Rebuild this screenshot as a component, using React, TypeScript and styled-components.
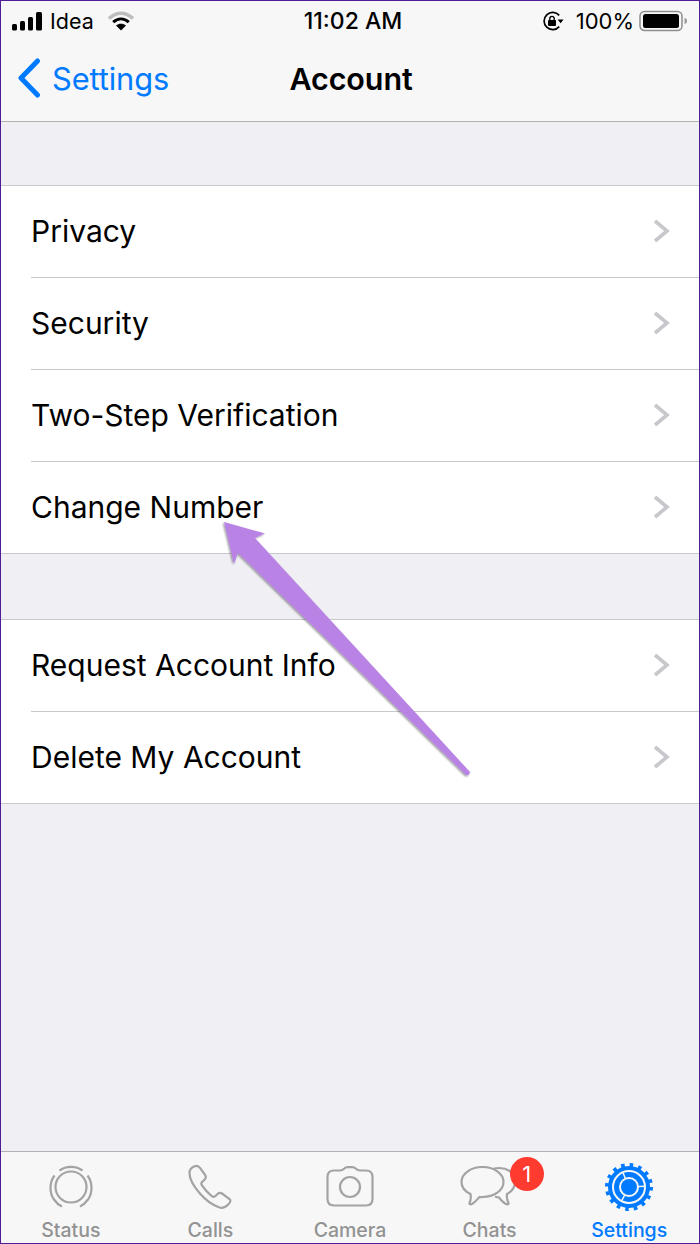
import React from "react";
import styled, { createGlobalStyle } from "styled-components";

const Global = createGlobalStyle`
  html, body { margin: 0; padding: 0; background: #efeff4; }
  * { box-sizing: border-box; }
`;

const Frame = styled.div`
  position: relative;
  width: 700px;
  height: 1244px;
  display: flex;
  flex-direction: column;
  background: #efeff4;
  border: 1px solid #4f1d96;
  overflow: hidden;
  font-family: Inter, "Liberation Sans", sans-serif;
  color: #000;
`;

const TopBars = styled.header`
  height: 121px;
  flex: none;
  background: #f7f7f7;
  border-bottom: 1px solid #b2b2b2;
  display: flex;
  flex-direction: column;
`;

const StatusBar = styled.div`
  height: 39px;
  padding: 0 10px;
  display: grid;
  grid-template-columns: 1fr auto 1fr;
  align-items: center;
`;

const StatusLeft = styled.div`
  display: flex;
  align-items: center;
  gap: 7px;
`;

const StatusRight = styled.div`
  display: flex;
  align-items: center;
  justify-content: flex-end;
  gap: 8px;
`;

const Carrier = styled.span`
  font-size: 21.5px;
  line-height: 24px;
  margin-right: 6px;
`;

const Clock = styled.span`
  font-size: 23px;
  line-height: 26px;
  font-weight: 500;
  padding-left: 6px;
`;

const BatteryText = styled.span`
  font-size: 22px;
  line-height: 24px;
  margin: 0 -3px 0 2px;
`;

const NavBar = styled.div`
  flex: 1;
  padding: 0 0 5px 16px;
  display: grid;
  grid-template-columns: 1fr auto 1fr;
  align-items: center;
`;

const BackLink = styled.div`
  display: flex;
  align-items: center;
  gap: 11px;
  color: #007aff;
  font-size: 30.8px;
  letter-spacing: -0.1px;
`;

const Title = styled.div`
  font-size: 30.5px;
  font-weight: 600;
  letter-spacing: -0.1px;
  padding-right: 14px;
`;

const Content = styled.main`
  flex: 1;
  padding-top: 63px;
  display: flex;
  flex-direction: column;
  gap: 65px;
`;

const Group = styled.section`
  background: #fff;
  border-top: 1px solid #c8c7cc;
  border-bottom: 1px solid #c8c7cc;
  padding-left: 30px;
`;

const Row = styled.div`
  height: 92px;
  padding: 0 29px 2px 0;
  display: flex;
  align-items: center;
  justify-content: space-between;
  border-bottom: 1px solid #c8c7cc;
  font-size: 30px;

  &:last-child {
    height: 91px;
    border-bottom: none;
  }
`;

const TabBar = styled.nav`
  height: 92px;
  flex: none;
  background: #f7f7f7;
  border-top: 1px solid #b2b2b2;
  display: grid;
  grid-template-columns: repeat(5, 1fr);
`;

const Tab = styled.div<{ $active?: boolean }>`
  position: relative;
  display: flex;
  flex-direction: column;
  align-items: center;
  padding-top: 9px;
  color: ${(p) => (p.$active ? "#007aff" : "#929292")};
  font-size: 19.5px;
  font-weight: 500;
`;

const TabIcon = styled.div`
  height: 52px;
  display: flex;
  align-items: center;
  justify-content: center;
`;

const TabLabel = styled.span`
  line-height: 24px;
  margin-top: 5px;
`;

const Badge = styled.span`
  position: absolute;
  top: 5px;
  left: 90px;
  width: 34px;
  height: 34px;
  border-radius: 50%;
  background: #ff3b30;
  color: #fff;
  font-size: 22px;
  font-weight: 400;
  display: flex;
  align-items: center;
  justify-content: center;
`;

const ArrowLayer = styled.svg`
  position: absolute;
  left: -1px;
  top: -1px;
  pointer-events: none;
`;

const Chevron = () => (
  <svg width="18" height="26" viewBox="0 0 18 26" fill="none">
    <path d="M3 3l12 10L3 23" stroke="#c7c7cc" strokeWidth="3.6" />
  </svg>
);

const rows1 = ["Privacy", "Security", "Two-Step Verification", "Change Number"];
const rows2 = ["Request Account Info", "Delete My Account"];

export default function App() {
  return (
    <>
      <Global />
      <Frame>
        <TopBars>
          <StatusBar>
            <StatusLeft>
              <svg width="32" height="20" viewBox="0 0 32 20" fill="#000">
                <rect x="1" y="13" width="5" height="6.5" rx="1.5" />
                <rect x="9" y="10" width="5" height="9.5" rx="1.5" />
                <rect x="17" y="6" width="5" height="13.5" rx="1.5" />
                <rect x="25" y="1" width="6" height="18.5" rx="1.5" />
              </svg>
              <Carrier>Idea</Carrier>
              <svg width="28" height="20" viewBox="0 0 28 20" fill="none">
                <path d="M2 7.5C9.5 .5 18.5 .5 26 7.5" stroke="#bdbdbd" strokeWidth="3.4" />
                <path d="M6.2 11.2C11 6.8 17 6.8 21.8 11.2" stroke="#000" strokeWidth="3" />
                <path d="M14 19.5l-5-5c3-2.2 7-2.2 10 0z" fill="#000" />
              </svg>
            </StatusLeft>
            <Clock>11:02 AM</Clock>
            <StatusRight>
              <svg width="24" height="22" viewBox="0 0 24 22" fill="none">
                <path d="M17.2 16.6A8.6 8.6 0 1 1 17.2 5.4" stroke="#000" strokeWidth="1.7" />
                <path d="M15.6 9.6h6l-3 3.6z" fill="#000" />
                <rect x="6" y="10" width="8" height="6" rx="1" fill="#000" />
                <path d="M7.8 10.500V8.600a2.200 2.200 0 0 1 4.400 0V10.500" stroke="#000" strokeWidth="1.400" />
              </svg>
              <BatteryText>100%</BatteryText>
              <svg width="50" height="22" viewBox="0 0 50 22" fill="none">
                <rect x="1" y="1.5" width="42" height="19" rx="4.5" stroke="#8e8e8e" strokeWidth="1.5" />
                <rect x="4" y="4" width="36" height="14" rx="2.5" fill="#000" />
                <path d="M45.5 8c2 .3 2.5 1.5 2.500 3s-.5 2.700-2.500 3z" fill="#9a9a9a" />
              </svg>
            </StatusRight>
          </StatusBar>
          <NavBar>
            <BackLink>
              <svg width="24" height="40" viewBox="0 0 24 40" fill="none">
                <path d="M20.5 3L4 20l16.500 17" stroke="#007aff" strokeWidth="5" strokeLinecap="round" strokeLinejoin="round" />
              </svg>
              <span>Settings</span>
            </BackLink>
            <Title>Account</Title>
            <span />
          </NavBar>
        </TopBars>

        <Content>
          <Group>
            {rows1.map((r) => (
              <Row key={r}>
                {r}
                <Chevron />
              </Row>
            ))}
          </Group>
          <Group>
            {rows2.map((r) => (
              <Row key={r}>
                {r}
                <Chevron />
              </Row>
            ))}
          </Group>
        </Content>

        <TabBar>
          <Tab>
            <TabIcon>
              <svg width="48" height="48" viewBox="0 0 48 48" fill="none" stroke="#a3a3a3" strokeWidth="2.2">
                <circle cx="24" cy="24" r="15.5" />
                <path d="M12.5 7.5C19 2.6 29 2.6 35.5 7.5" />
                <path d="M40.5 12.5C46 20 45.5 30 41 36.5C38.8 39.5 36.5 41.8 33 43.5" />
                <path d="M7.5 12.5C2 20 2.5 30 7 36.5C9 39.500 11.500 41.800 15 43.500" />
              </svg>
            </TabIcon>
            <TabLabel>Status</TabLabel>
          </Tab>
          <Tab>
            <TabIcon>
              <svg width="46" height="46" viewBox="0 0 46 46" fill="none" stroke="#a3a3a3" strokeWidth="2.2">
                <path d="M7 2.500c-2.300 1-4.500 3-4.500 6.500 0 6 4 13 10 20s14 12.500 20 14.500c3.500 1 6-.3 9-3.300 2-2 2.500-3.700 1-5.200l-7.500-5.500c-1.500-1-3-.8-4.500.5l-2 2c-1 1-2.500 1-4-.2-2.500-2-7.500-7.500-9.500-10.500-1-1.500-1-2.500.2-3.500l2.500-2.300c1.300-1.300 1.300-2.800.5-4.300L13 4c-1.500-2.300-3.500-2.600-6-1.500z" />
              </svg>
            </TabIcon>
            <TabLabel>Calls</TabLabel>
          </Tab>
          <Tab>
            <TabIcon>
              <svg width="48" height="42" viewBox="0 0 48 42" fill="none" stroke="#a3a3a3" strokeWidth="2.2">
                <path d="M8 4.500H14C16 4.500 17 3.800 18 2.800C19 1.500 20.500 1.200 22 1.200H26C27.500 1.200 29 1.500 30 2.800C31 3.800 32 4.500 34 4.500H40C44 4.500 46.500 7 46.500 11V33C46.500 37 44 39.500 40 39.500H8C4 39.500 1.500 37 1.500 33V11C1.500 7 4 4.500 8 4.500Z" />
                <circle cx="24" cy="21" r="10" />
              </svg>
            </TabIcon>
            <TabLabel>Camera</TabLabel>
          </Tab>
          <Tab>
            <TabIcon>
              <svg width="60" height="42" viewBox="0 0 60 42" fill="none" stroke="#a3a3a3" strokeWidth="2.2">
                <path d="M22.500 1C11 1 1.500 7.500 1.500 16C1.500 21 5 25.500 10.500 28C11 31 11 34 9.500 37C9 38.500 11 38.500 12 38C15 36.500 17.500 33 19.500 31C21 31.200 21.500 31 22.500 31C34 31 43.500 24.500 43.500 16C43.500 7.500 34 1 22.500 1Z" />
                <path d="M33 3C35 2.200 37.500 2 39.500 2C47 2 53 6 55 12C56 20 53 25 47 28C46.500 31 47 34 48.500 37C49 38.500 47 38.500 46 38C43 36.500 41 34 39 31.500C37.500 31.500 36.500 31.200 35 30.500" />
              </svg>
            </TabIcon>
            <TabLabel>Chats</TabLabel>
            <Badge>1</Badge>
          </Tab>
          <Tab $active>
            <TabIcon>
              <svg width="50" height="50" viewBox="0 0 50 50" fill="none" stroke="#007aff">
                <circle cx="25" cy="25" r="22" strokeWidth="4" strokeDasharray="3.6 5.04" />
                <circle cx="25" cy="25" r="19" strokeWidth="4" />
                <circle cx="25" cy="25" r="12.500" strokeWidth="5" />
                <circle cx="25" cy="25" r="8" fill="#007aff" stroke="none" />
                <path d="M21.300 16.300L18.800 10.300M34.500 24.500L41 24.200M20.500 33.400L17.500 39.100" stroke="#f7f7f7" strokeWidth="1.500" />
              </svg>
            </TabIcon>
            <TabLabel>Settings</TabLabel>
          </Tab>
        </TabBar>

        <ArrowLayer width="700" height="1244" viewBox="0 0 700 1244">
          <defs>
            <filter id="arrowShadow" x="-10%" y="-10%" width="120%" height="120%">
              <feDropShadow dx="-1" dy="1" stdDeviation="1.200" floodColor="#000" floodOpacity="0.45" />
            </filter>
          </defs>
          <path
            d="M224 522L265 533.500L255 538L470 772Q469 776 466 775L238 553L234 564Z"
            fill="#b983e6"
            filter="url(#arrowShadow)"
          />
        </ArrowLayer>
      </Frame>
    </>
  );
}
